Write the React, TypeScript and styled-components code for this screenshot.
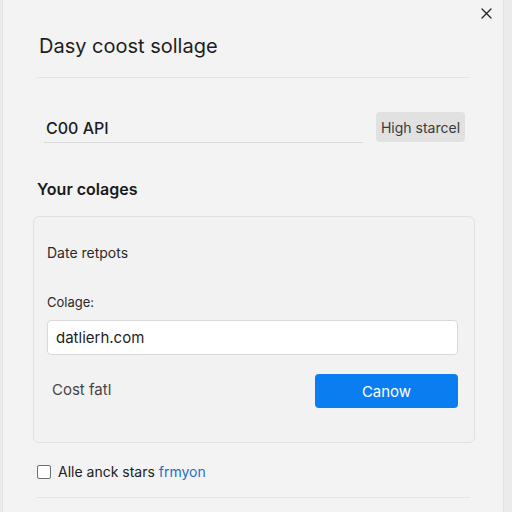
import React from 'react';
import styled, { createGlobalStyle } from 'styled-components';

const GlobalStyle = createGlobalStyle`
    html, body {
        margin: 0;
        padding: 0;
        background: #ebebeb;
        font-family: Inter, "Liberation Sans", Arial, sans-serif;
        color: #1f1f1f;
    }
`;

const Panel = styled.section`
    position: relative;
    box-sizing: border-box;
    width: 502px;
    height: 512px;
    margin-left: 2px;
    padding: 0 33px 0 34px;
    background: #f3f3f3;
    border-left: 1px solid #e2e2e2;
    border-right: 1px solid #e2e2e2;
    overflow: hidden;
`;

const CloseButton = styled.button`
    position: absolute;
    top: 5px;
    right: 9px;
    width: 16px;
    height: 16px;
    padding: 0;
    border: none;
    background: transparent;
    display: flex;
    align-items: center;
    justify-content: center;
    cursor: pointer;
`;

const Header = styled.header`
    height: 78px;
    box-sizing: border-box;
    padding-top: 32px;
    border-bottom: 1px solid #e4e4e4;
`;

const Title = styled.h1`
    margin: 0 0 0 2px;
    font-size: 20px;
    line-height: 28px;
    font-weight: 400;
    color: #1e1e1e;
`;

const ApiRow = styled.div`
    display: flex;
    align-items: flex-end;
    justify-content: space-between;
    margin-top: 34px;
    padding: 0 5px 0 7px;
`;

const UnderlineField = styled.div`
    width: 319px;
    height: 30px;
    box-sizing: border-box;
    padding-left: 2px;
    display: flex;
    align-items: center;
    border-bottom: 1px solid #d8d8d8;
    font-size: 16px;
    font-weight: 500;
    color: #1c1c1c;
`;

const GreyButton = styled.button`
    width: 89px;
    height: 30px;
    margin-bottom: 1px;
    padding: 0;
    border: none;
    border-radius: 4px;
    background: #e1e1e1;
    color: #3a3a3a;
    font-family: inherit;
    font-size: 14px;
    white-space: nowrap;
    cursor: pointer;
`;

const SectionTitle = styled.h2`
    margin: 36px 0 0;
    font-size: 16px;
    line-height: 20px;
    font-weight: 600;
    color: #1a1a1a;
`;

const Card = styled.div`
    margin: 17px -5px 0 -4px;
    height: 227px;
    box-sizing: border-box;
    padding: 26px 16px 0 13px;
    border: 1px solid #e1e1e1;
    border-radius: 6px;
    background: #f2f2f2;
`;

const CardLabel = styled.div<{ $size?: number; $gap?: number }>`
    margin-top: ${(p) => p.$gap ?? 0}px;
    font-size: ${(p) => p.$size ?? 14}px;
    line-height: 20px;
    color: #2a2a2a;
`;

const TextInput = styled.input`
    display: block;
    width: 100%;
    height: 35px;
    margin-top: 8px;
    box-sizing: border-box;
    padding: 0 8px;
    border: 1px solid #d9d9d9;
    border-radius: 4px;
    background: #ffffff;
    font-family: inherit;
    font-size: 15px;
    color: #1e1e1e;
    outline: none;
`;

const ActionRow = styled.div`
    display: flex;
    align-items: center;
    justify-content: space-between;
    margin-top: 19px;
`;

const MutedText = styled.span`
    margin-left: 5px;
    margin-top: -4px;
    font-size: 15px;
    color: #454545;
`;

const PrimaryButton = styled.button`
    width: 143px;
    height: 34px;
    border: none;
    border-radius: 4px;
    background: #0a7ef1;
    color: #ffffff;
    font-family: inherit;
    font-size: 15px;
    cursor: pointer;
`;

const CheckRow = styled.label`
    display: flex;
    align-items: center;
    gap: 7px;
    margin-top: 20px;
    font-size: 14px;
    color: #222;
`;

const Box = styled.span`
    width: 12px;
    height: 12px;
    border: 1px solid #6f6f6f;
    border-radius: 2px;
    background: #fff;
`;

const Link = styled.a`
    color: #1f6fc5;
    text-decoration: none;
`;

const Footer = styled.div`
    margin-top: 17px;
    border-top: 1px solid #e4e4e4;
`;

const App: React.FC = () => {
    return (
        <>
            <GlobalStyle />
            <Panel>
                <CloseButton aria-label="Close">
                    <svg width="11" height="11" viewBox="0 0 11 11">
                        <path d="M1 1L10 10M10 1L1 10" stroke="#222" strokeWidth="1.3" strokeLinecap="round" />
                    </svg>
                </CloseButton>
                <Header>
                    <Title>Dasy coost sollage</Title>
                </Header>
                <ApiRow>
                    <UnderlineField>C00 API</UnderlineField>
                    <GreyButton>High starcel</GreyButton>
                </ApiRow>
                <SectionTitle>Your colages</SectionTitle>
                <Card>
                    <CardLabel>Date retpots</CardLabel>
                    <CardLabel $size={13} $gap={29}>Colage:</CardLabel>
                    <TextInput defaultValue="datlierh.com" />
                    <ActionRow>
                        <MutedText>Cost fatl</MutedText>
                        <PrimaryButton>Canow</PrimaryButton>
                    </ActionRow>
                </Card>
                <CheckRow>
                    <Box />
                    <span>
                        Alle anck stars <Link href="#">frmyon</Link>
                    </span>
                </CheckRow>
                <Footer />
            </Panel>
        </>
    );
};

export default App;
